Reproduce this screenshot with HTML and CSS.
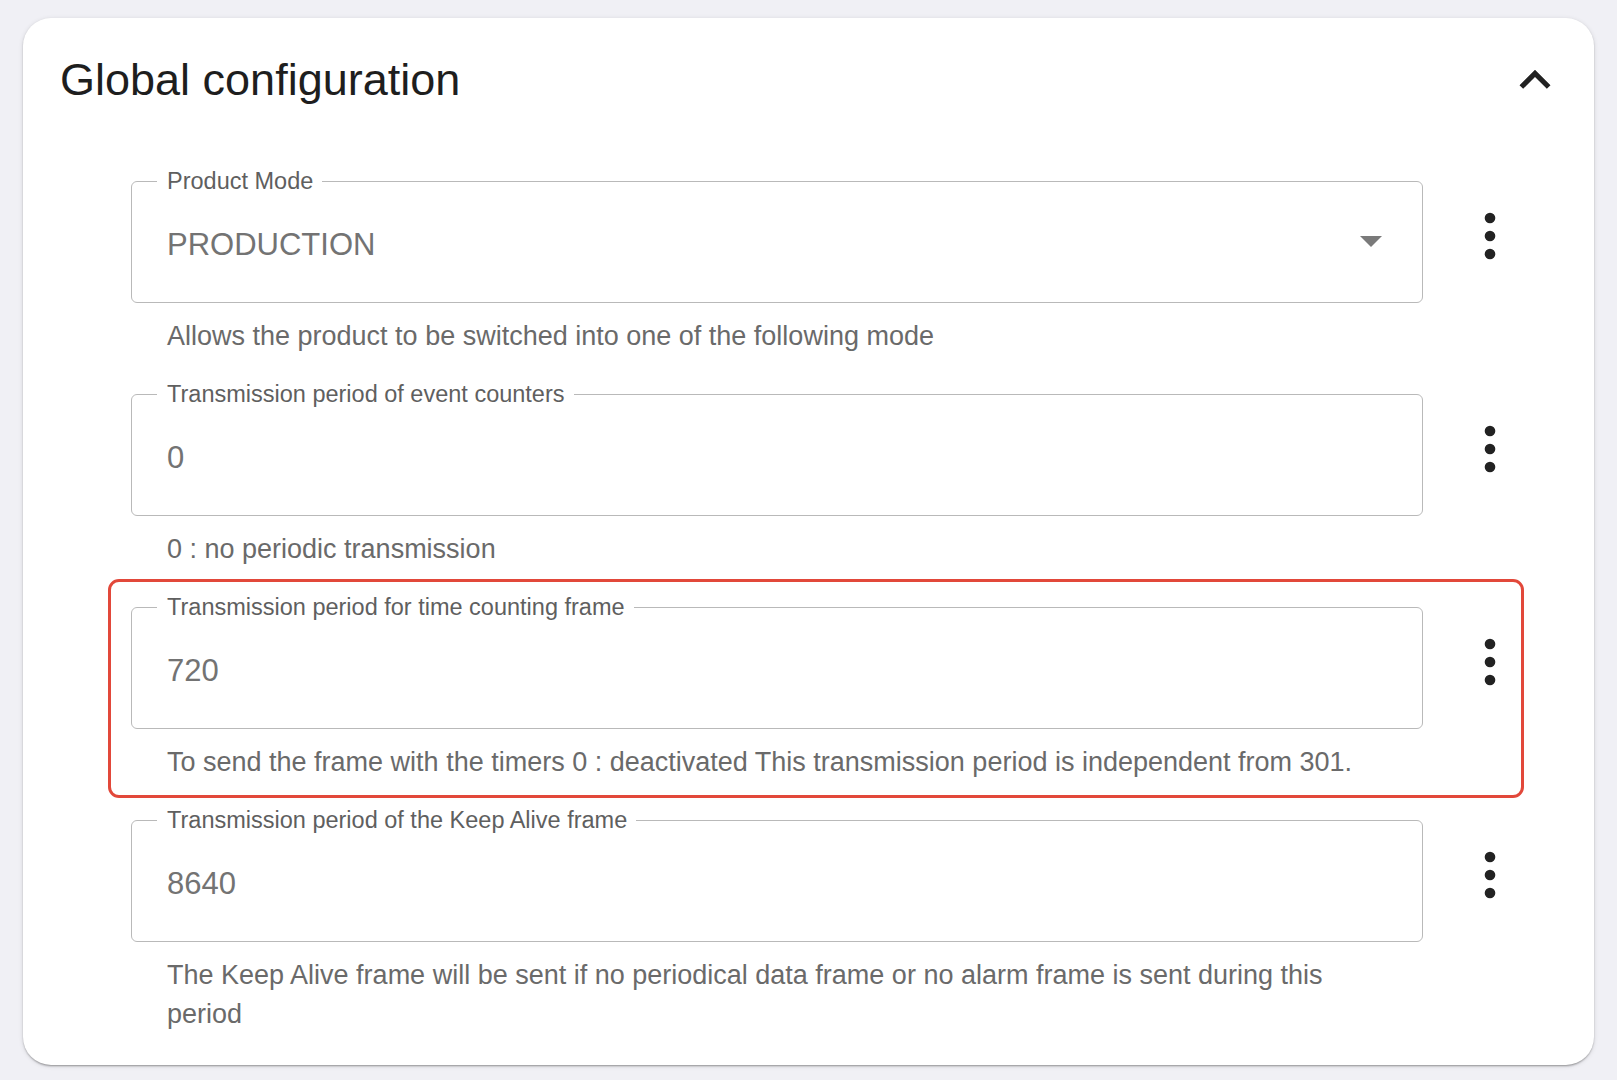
FILE: index.html
```html
<!DOCTYPE html>
<html lang="en">
<head>
<meta charset="utf-8">
<title>Global configuration</title>
<link rel="stylesheet" href="styles.css">
</head>
<body>
<section class="card">
  <header class="card-header">
    <h1 class="title">Global configuration</h1>
    <button class="icon-btn collapse" aria-label="Collapse">
      <svg viewBox="0 0 24 24" width="62" height="62"><path d="M12 8l-6 6 1.41 1.41L12 10.83l4.59 4.58L18 14z" fill="#222"/></svg>
    </button>
  </header>
  <div class="card-body">
    <div class="row">
      <div class="field-col">
        <fieldset class="field">
          <legend class="label">Product Mode</legend>
          <div class="value select">
            <span>PRODUCTION</span>
            <svg class="caret" viewBox="0 0 22 11" width="22" height="11"><path d="M0 0h22L11 11z" fill="#7a7a7a"/></svg>
          </div>
        </fieldset>
        <p class="helper">Allows the product to be switched into one of the following mode</p>
      </div>
      <button class="icon-btn kebab" aria-label="More"><svg viewBox="0 0 12 48" width="12" height="48"><circle cx="6" cy="6" r="5.3"/><circle cx="6" cy="24" r="5.3"/><circle cx="6" cy="42" r="5.3"/></svg></button>
    </div>
    <div class="row">
      <div class="field-col">
        <fieldset class="field">
          <legend class="label">Transmission period of event counters</legend>
          <div class="value"><span>0</span></div>
        </fieldset>
        <p class="helper">0 : no periodic transmission</p>
      </div>
      <button class="icon-btn kebab" aria-label="More"><svg viewBox="0 0 12 48" width="12" height="48"><circle cx="6" cy="6" r="5.3"/><circle cx="6" cy="24" r="5.3"/><circle cx="6" cy="42" r="5.3"/></svg></button>
    </div>
    <div class="row highlighted">
      <div class="field-col">
        <fieldset class="field">
          <legend class="label">Transmission period for time counting frame</legend>
          <div class="value"><span>720</span></div>
        </fieldset>
        <p class="helper">To send the frame with the timers 0 : deactivated This transmission period is independent from 301.</p>
      </div>
      <button class="icon-btn kebab" aria-label="More"><svg viewBox="0 0 12 48" width="12" height="48"><circle cx="6" cy="6" r="5.3"/><circle cx="6" cy="24" r="5.3"/><circle cx="6" cy="42" r="5.3"/></svg></button>
    </div>
    <div class="row">
      <div class="field-col">
        <fieldset class="field">
          <legend class="label">Transmission period of the Keep Alive frame</legend>
          <div class="value"><span>8640</span></div>
        </fieldset>
        <p class="helper">The Keep Alive frame will be sent if no periodical data frame or no alarm frame is sent during this period</p>
      </div>
      <button class="icon-btn kebab" aria-label="More"><svg viewBox="0 0 12 48" width="12" height="48"><circle cx="6" cy="6" r="5.3"/><circle cx="6" cy="24" r="5.3"/><circle cx="6" cy="42" r="5.3"/></svg></button>
    </div>
  </div>
</section>
</body>
</html>
```
FILE: styles.css
```css
* { box-sizing: border-box; }
html, body { margin: 0; padding: 0; }
body {
  background: #f0f0f5;
  padding: 18px 23px;
  font-family: "Liberation Sans", Arial, sans-serif;
  color: #222;
}
.card {
  background: #fff;
  border-radius: 28px;
  box-shadow: 0 2px 2px -1px rgba(0,0,0,0.22), 0 1px 2px 0 rgba(0,0,0,0.14), 0 1px 5px 0 rgba(0,0,0,0.12);
  width: 1571px;
  height: 1047px;
  overflow: hidden;
}
.card-header {
  display: flex;
  justify-content: space-between;
  align-items: flex-start;
  padding: 36px 28px 0 37px;
  height: 137px;
}
.title {
  margin: 0;
  font-weight: 400;
  font-size: 45px;
  line-height: 52px;
  color: #1e1e1e;
}
.icon-btn {
  border: 0;
  background: transparent;
  padding: 0;
  display: flex;
  align-items: center;
  justify-content: center;
  cursor: pointer;
}
.collapse {
  width: 62px;
  height: 62px;
  margin-top: -5px;
}
.card-body {
  padding: 0 70px 19px 85px;
}
.row {
  display: flex;
  align-items: flex-start;
  gap: 43px;
  border: 3px solid transparent;
  border-radius: 11px;
  padding: 10px 7px 9px 20px;
}
.row.highlighted {
  border-color: #e2483a;
  margin: -2px 0 -4px;
  padding-top: 12px;
  padding-bottom: 13px;
}
.field-col { flex: 1; min-width: 0; }
.field {
  margin: 0;
  padding: 0;
  border: 1px solid #b9b9b9;
  border-radius: 6px;
  min-width: 0;
}
.label {
  margin-left: 25px;
  padding: 0 9px 0 10px;
  font-size: 23.5px;
  line-height: 26px;
  color: #5f5f5f;
}
.value {
  display: flex;
  align-items: center;
  justify-content: space-between;
  padding: 33px 40px 39px 35px;
  font-size: 31px;
  line-height: 36px;
  color: #737373;
}
.caret { margin-top: -8px; }
.helper {
  margin: 14px 36px 0 36px;
  font-size: 27px;
  line-height: 39px;
  color: #6a6a6a;
}
.kebab {
  width: 48px;
  height: 48px;
  margin-top: 44px;
  fill: #222;
}
```
